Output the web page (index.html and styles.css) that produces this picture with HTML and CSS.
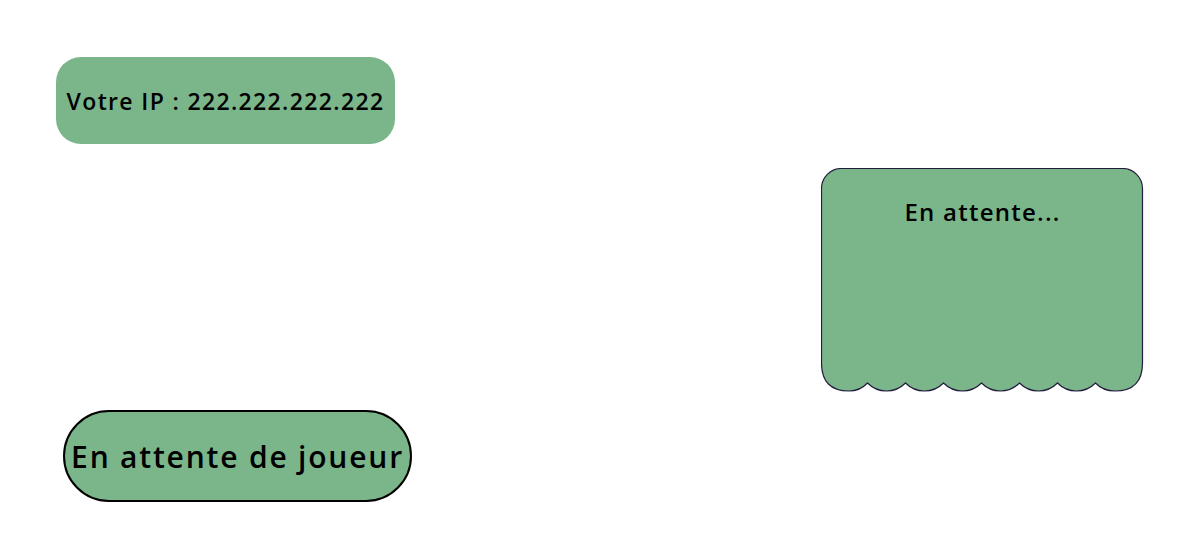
FILE: index.html
```html
<!DOCTYPE html>
<html lang="fr">
    <head>
        <meta charset="UTF-8">
        <meta name="viewport" content="width=device-width, initial-scale=1.0">
        <link rel="stylesheet" href="styles.css">
        <title>Salle d'attente</title>
    </head>
    <body>
        <div id="page">
            <div id="ip-box">
                <p>Votre IP : 222.222.222.222</p>
            </div>

            <div id="players-row">
                <div id="players-card">
                    <svg class="card-shape" width="323" height="224" viewBox="0 0 323 224">
                        <path d="M0.5,20.5 A20,20 0 0 1 20.5,0.5 L301.5,0.5 A20,20 0 0 1 321.5,20.5 L321.5,195
                                 Q321.5,223 294,223 Q282,223 274.5,215
                                 A26.6,26.6 0 0 1 236.5,215
                                 A26.6,26.6 0 0 1 198.5,215
                                 A26.6,26.6 0 0 1 160.5,215
                                 A26.6,26.6 0 0 1 122.5,215
                                 A26.6,26.6 0 0 1 84.5,215
                                 A26.6,26.6 0 0 1 46.5,215
                                 Q39,223 28,223 Q0.5,223 0.5,195 Z"
                              fill="#7bb68a" stroke="#221d3d" stroke-width="1.2"/>
                    </svg>
                    <p class="card-title">En attente...</p>
                </div>
            </div>

            <div id="status-pill">
                <p>En attente de joueur</p>
            </div>
        </div>
    </body>
</html>
```

FILE: styles.css
```css
 body {
     margin: 0;
     background-color: white;
     font-family: 'Open Sans', 'Noto Sans', sans-serif;
     font-weight: 600;
     color: black;
 }

 p {
     margin: 0;
 }

 #page {
     width: 1200px;
     height: 560px;
     overflow: hidden;
 }

 #ip-box {
     margin: 57px 0 0 56px;
     width: 339px;
     height: 87px;
     border-radius: 25px;
     background-color: #7bb68a;
     /*center the text*/
     display: flex;
     align-items: center;
     justify-content: center;
     font-size: 23px;
     letter-spacing: 1.35px;
 }

 #players-row {
     display: flex;
     flex-direction: row;
     margin-top: 24px;
     padding-left: 821px;
 }

 #players-card {
     position: relative;
     width: 323px;
     height: 224px;
 }

 .card-shape {
     position: absolute;
     top: 0;
     left: 0;
 }

 .card-title {
     position: relative;
     text-align: center;
     padding-top: 27px;
     font-size: 24px;
     letter-spacing: 1.25px;
 }

 #status-pill {
     margin: 18px 0 0 63px;
     width: 345px;
     height: 88px;
     border: 2px solid black;
     border-radius: 46px;
     background-color: #7bb68a;
     display: flex;
     align-items: center;
     justify-content: center;
     font-size: 30px;
     letter-spacing: 1.8px;
 }
```
